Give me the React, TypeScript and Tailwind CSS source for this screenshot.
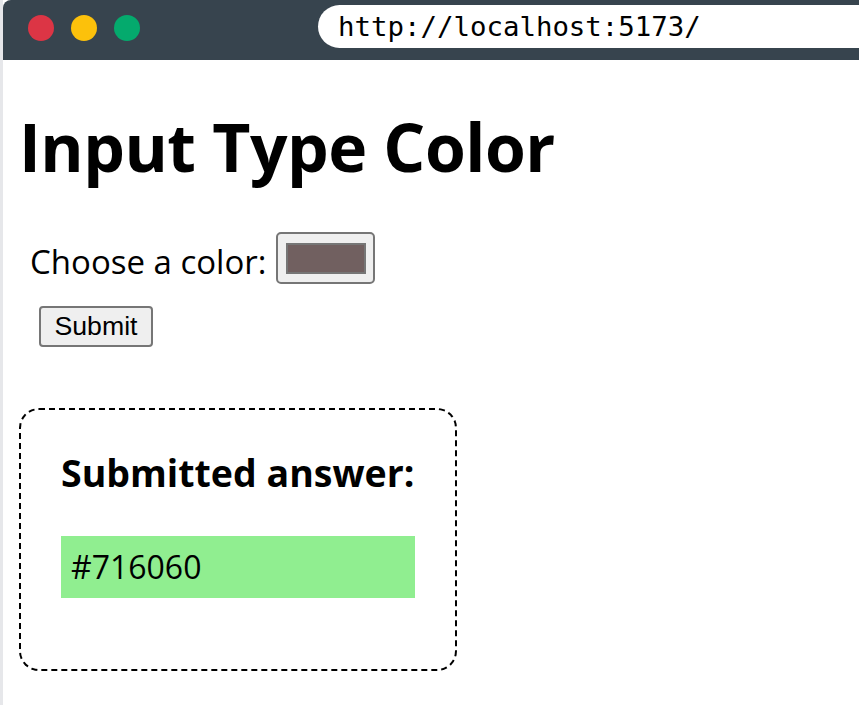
export default function App() {
  return (
    <div className="flex min-h-[705px] w-[859px] overflow-hidden bg-white">
      <div className="w-[3px] shrink-0 bg-[#e6e7ea]" />
      <div className="flex min-w-0 flex-1 flex-col">
        {/* browser chrome */}
        <div className="flex h-[60px] shrink-0 items-start rounded-tl-[8px] bg-[#37444e]">
          <div className="ml-[25px] mt-[15px] flex gap-[17px]">
            <span className="block h-[26px] w-[26px] rounded-full bg-[#dc3545]" />
            <span className="block h-[26px] w-[26px] rounded-full bg-[#fcc10b]" />
            <span className="block h-[26px] w-[26px] rounded-full bg-[#04aa6d]" />
          </div>
          <div
            className="ml-[178px] mt-[5px] flex h-[43px] flex-1 items-center rounded-l-full bg-white pl-[20px] text-[27.4px] text-black"
            style={{ fontFamily: '"DejaVu Sans Mono", "Liberation Mono", monospace' }}
          >
            http://localhost:5173/
          </div>
        </div>

        {/* page body */}
        <div
          className="flex flex-col items-start pl-[16px] text-black"
          style={{ fontFamily: '"Open Sans", "Noto Sans", sans-serif' }}
        >
          <h1 className="mt-[53px] text-[66px] font-bold leading-none tracking-[-0.5px]">
            Input Type Color
          </h1>

          <div className="mt-[53px] ml-[11px] flex items-center gap-[10px]">
            <span className="pt-[6px] text-[33px] leading-none">Choose a color:</span>
            <div className="flex h-[52px] w-[99px] items-center justify-center rounded-[5px] border-2 border-[#767676] bg-[#efefef]">
              <div className="h-[31px] w-[80px] border-2 border-[#767676] bg-[#716060]" />
            </div>
          </div>

          <button
            className="ml-[20px] mt-[22px] flex h-[41px] w-[114px] items-center justify-center rounded-[4px] border-2 border-[#767676] bg-[#efefef] text-[26.67px] leading-none text-black"
            style={{ fontFamily: '"Liberation Sans", Arial, sans-serif' }}
          >
            Submit
          </button>

          <div className="mt-[61px] w-[438px] rounded-[20px] border-2 border-dashed border-black px-[40px] pb-[71px] pt-[44px]">
            <h3 className="text-[37.5px] font-bold leading-none">Submitted answer:</h3>
            <div className="mt-[44px] flex h-[62px] w-[354px] items-center bg-[#90ee90] pl-[10px] text-[32px] leading-none">
              #716060
            </div>
          </div>
        </div>
      </div>
    </div>
  );
}
